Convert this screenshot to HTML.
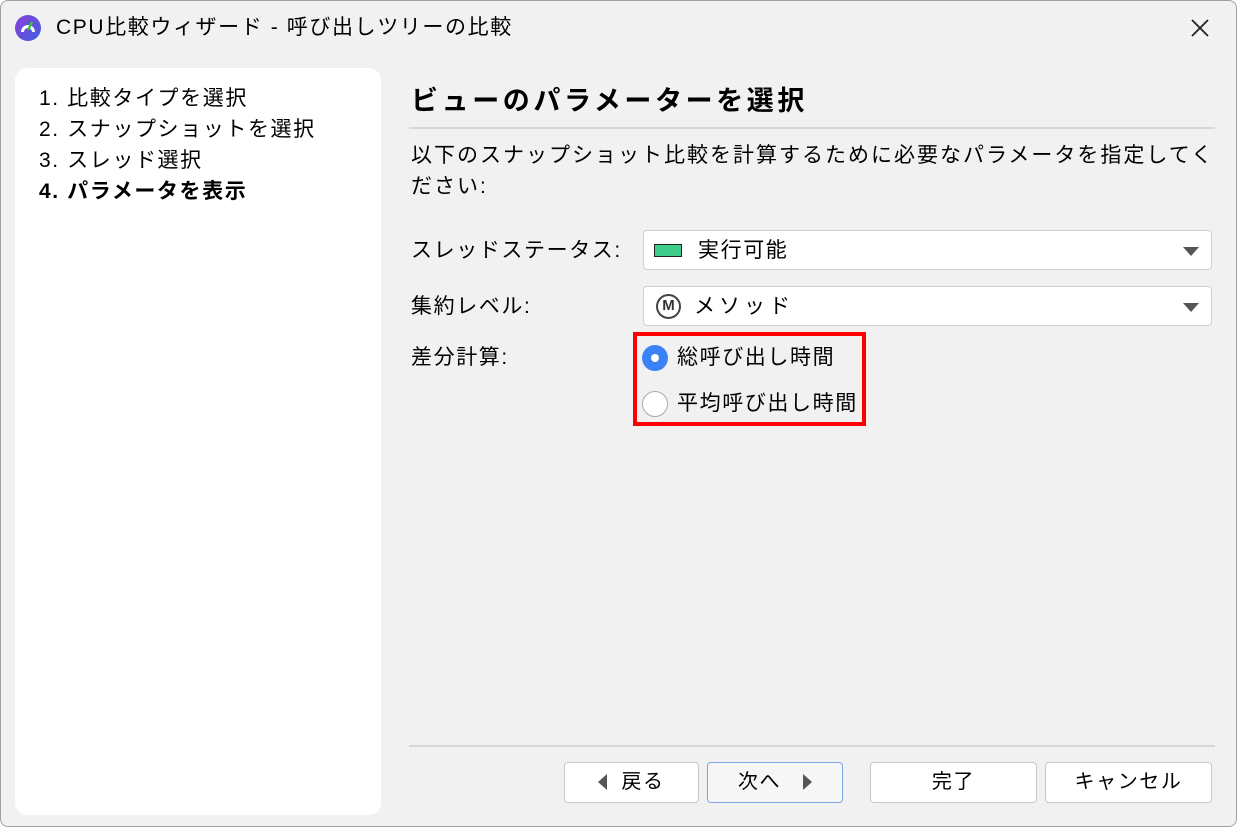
<!DOCTYPE html>
<html><head><meta charset="utf-8"><style>
*{box-sizing:border-box;margin:0;padding:0}
body{width:1237px;height:827px;background:#fff;font-family:"Liberation Sans","Noto Sans CJK JP",sans-serif;color:#000;overflow:hidden;letter-spacing:1.6px}
.win{position:absolute;left:0;top:0;width:1237px;height:827px;background:#f1f1f1;border:1px solid #a0a0a0;border-radius:8px;overflow:hidden}
.abs{position:absolute;white-space:nowrap}
.side{position:absolute;left:14px;top:67px;width:366px;height:747px;background:#fff;border-radius:12px}
.side div{position:absolute;left:24px;font-size:21px}
.combo{position:absolute;left:642px;width:569px;height:40px;background:#fff;border:1px solid #cfcfcf;border-radius:4px}
.tri{position:absolute;right:12px;top:16px;width:0;height:0;border-left:8px solid transparent;border-right:8px solid transparent;border-top:9px solid #555}
.btn{position:absolute;top:761px;height:41px;background:#fff;border:1px solid #c8c8c8;border-radius:4px;font-size:20px;text-align:center;line-height:38px}
</style></head><body><div class="win">
<svg class="abs" style="left:13px;top:13px" width="28" height="28" viewBox="0 0 28 28"><defs><linearGradient id="g" x1="0" y1="0" x2="1" y2="1"><stop offset="0" stop-color="#8a3fd8"/><stop offset="1" stop-color="#3f5fe0"/></linearGradient></defs><circle cx="14" cy="14" r="13" fill="url(#g)"/><path d="M7 18a7 7 0 1 1 14 0l-3 0a4 4 0 0 0-8 0z" fill="#fff"/><path d="M14 16l4-8" stroke="#3c3" stroke-width="2.5"/></svg>
<div class="abs" style="left:55px;top:10px;font-size:21px">CPU比較ウィザード - 呼び出しツリーの比較</div>
<svg class="abs" style="left:1188px;top:16px" width="22" height="22"><path d="M3 3L19 19M19 3L3 19" stroke="#222" stroke-width="1.8"/></svg>
<div class="side">
<div style="top:14px">1. 比較タイプを選択</div>
<div style="top:45px">2. スナップショットを選択</div>
<div style="top:76px">3. スレッド選択</div>
<div style="top:107px;font-weight:bold">4. パラメータを表示</div>
</div>
<div class="abs" style="left:410px;top:78px;font-size:27px;font-weight:bold;letter-spacing:3.6px">ビューのパラメーターを選択</div>
<div class="abs" style="left:408px;top:126px;width:806px;height:2px;background:#d6d6d6"></div>
<div class="abs" style="left:410px;top:139px;font-size:21px;line-height:31px;white-space:normal;width:810px;letter-spacing:2px">以下のスナップショット比較を計算するために必要なパラメータを指定してください:</div>
<div class="abs" style="left:410px;top:233px;font-size:21px">スレッドステータス:</div>
<div class="combo" style="top:229px"><div class="abs" style="left:10px;top:13px;width:28px;height:13px;background:#3ecb8c;border:1px solid #222"></div><div class="abs" style="left:54px;top:3px;font-size:21px">実行可能</div><div class="tri"></div></div>
<div class="abs" style="left:410px;top:289px;font-size:21px">集約レベル:</div>
<div class="combo" style="top:285px"><div class="abs" style="left:12px;top:7px;width:25px;height:25px;border:2.5px solid #444;border-radius:50%;font-size:15px;font-weight:bold;text-align:center;line-height:20px;color:#333;letter-spacing:0">M</div><div class="abs" style="left:50px;top:3px;font-size:21px;letter-spacing:4px">メソッド</div><div class="tri"></div></div>
<div class="abs" style="left:410px;top:340px;font-size:21px">差分計算:</div>
<div class="abs" style="left:632px;top:331px;width:233px;height:94px;border:4px solid #f00"></div>
<div class="abs" style="left:641px;top:344px;width:26px;height:26px;border-radius:50%;background:#3b82f6"><div class="abs" style="left:9px;top:9px;width:8px;height:8px;border-radius:50%;background:#fff"></div></div>
<div class="abs" style="left:676px;top:340px;font-size:21px">総呼び出し時間</div>
<div class="abs" style="left:641px;top:390px;width:26px;height:26px;border-radius:50%;background:#fff;border:1.5px solid #aaa"></div>
<div class="abs" style="left:676px;top:386px;font-size:21px">平均呼び出し時間</div>
<div class="abs" style="left:408px;top:744px;width:806px;height:2px;background:#d6d6d6"></div>
<div class="btn" style="left:563px;width:135px"><span style="display:inline-block;width:0;height:0;border-top:8px solid transparent;border-bottom:8px solid transparent;border-right:9px solid #555;vertical-align:-2px;margin-right:14px"></span>戻る</div>
<div class="btn" style="left:706px;width:136px;border-color:#7ea6e0;background:#f6f6f6">次へ<span style="display:inline-block;width:0;height:0;border-top:8px solid transparent;border-bottom:8px solid transparent;border-left:9px solid #555;vertical-align:-2px;margin-left:22px"></span></div>
<div class="btn" style="left:869px;width:167px">完了</div>
<div class="btn" style="left:1044px;width:167px">キャンセル</div>
</div></body></html>
